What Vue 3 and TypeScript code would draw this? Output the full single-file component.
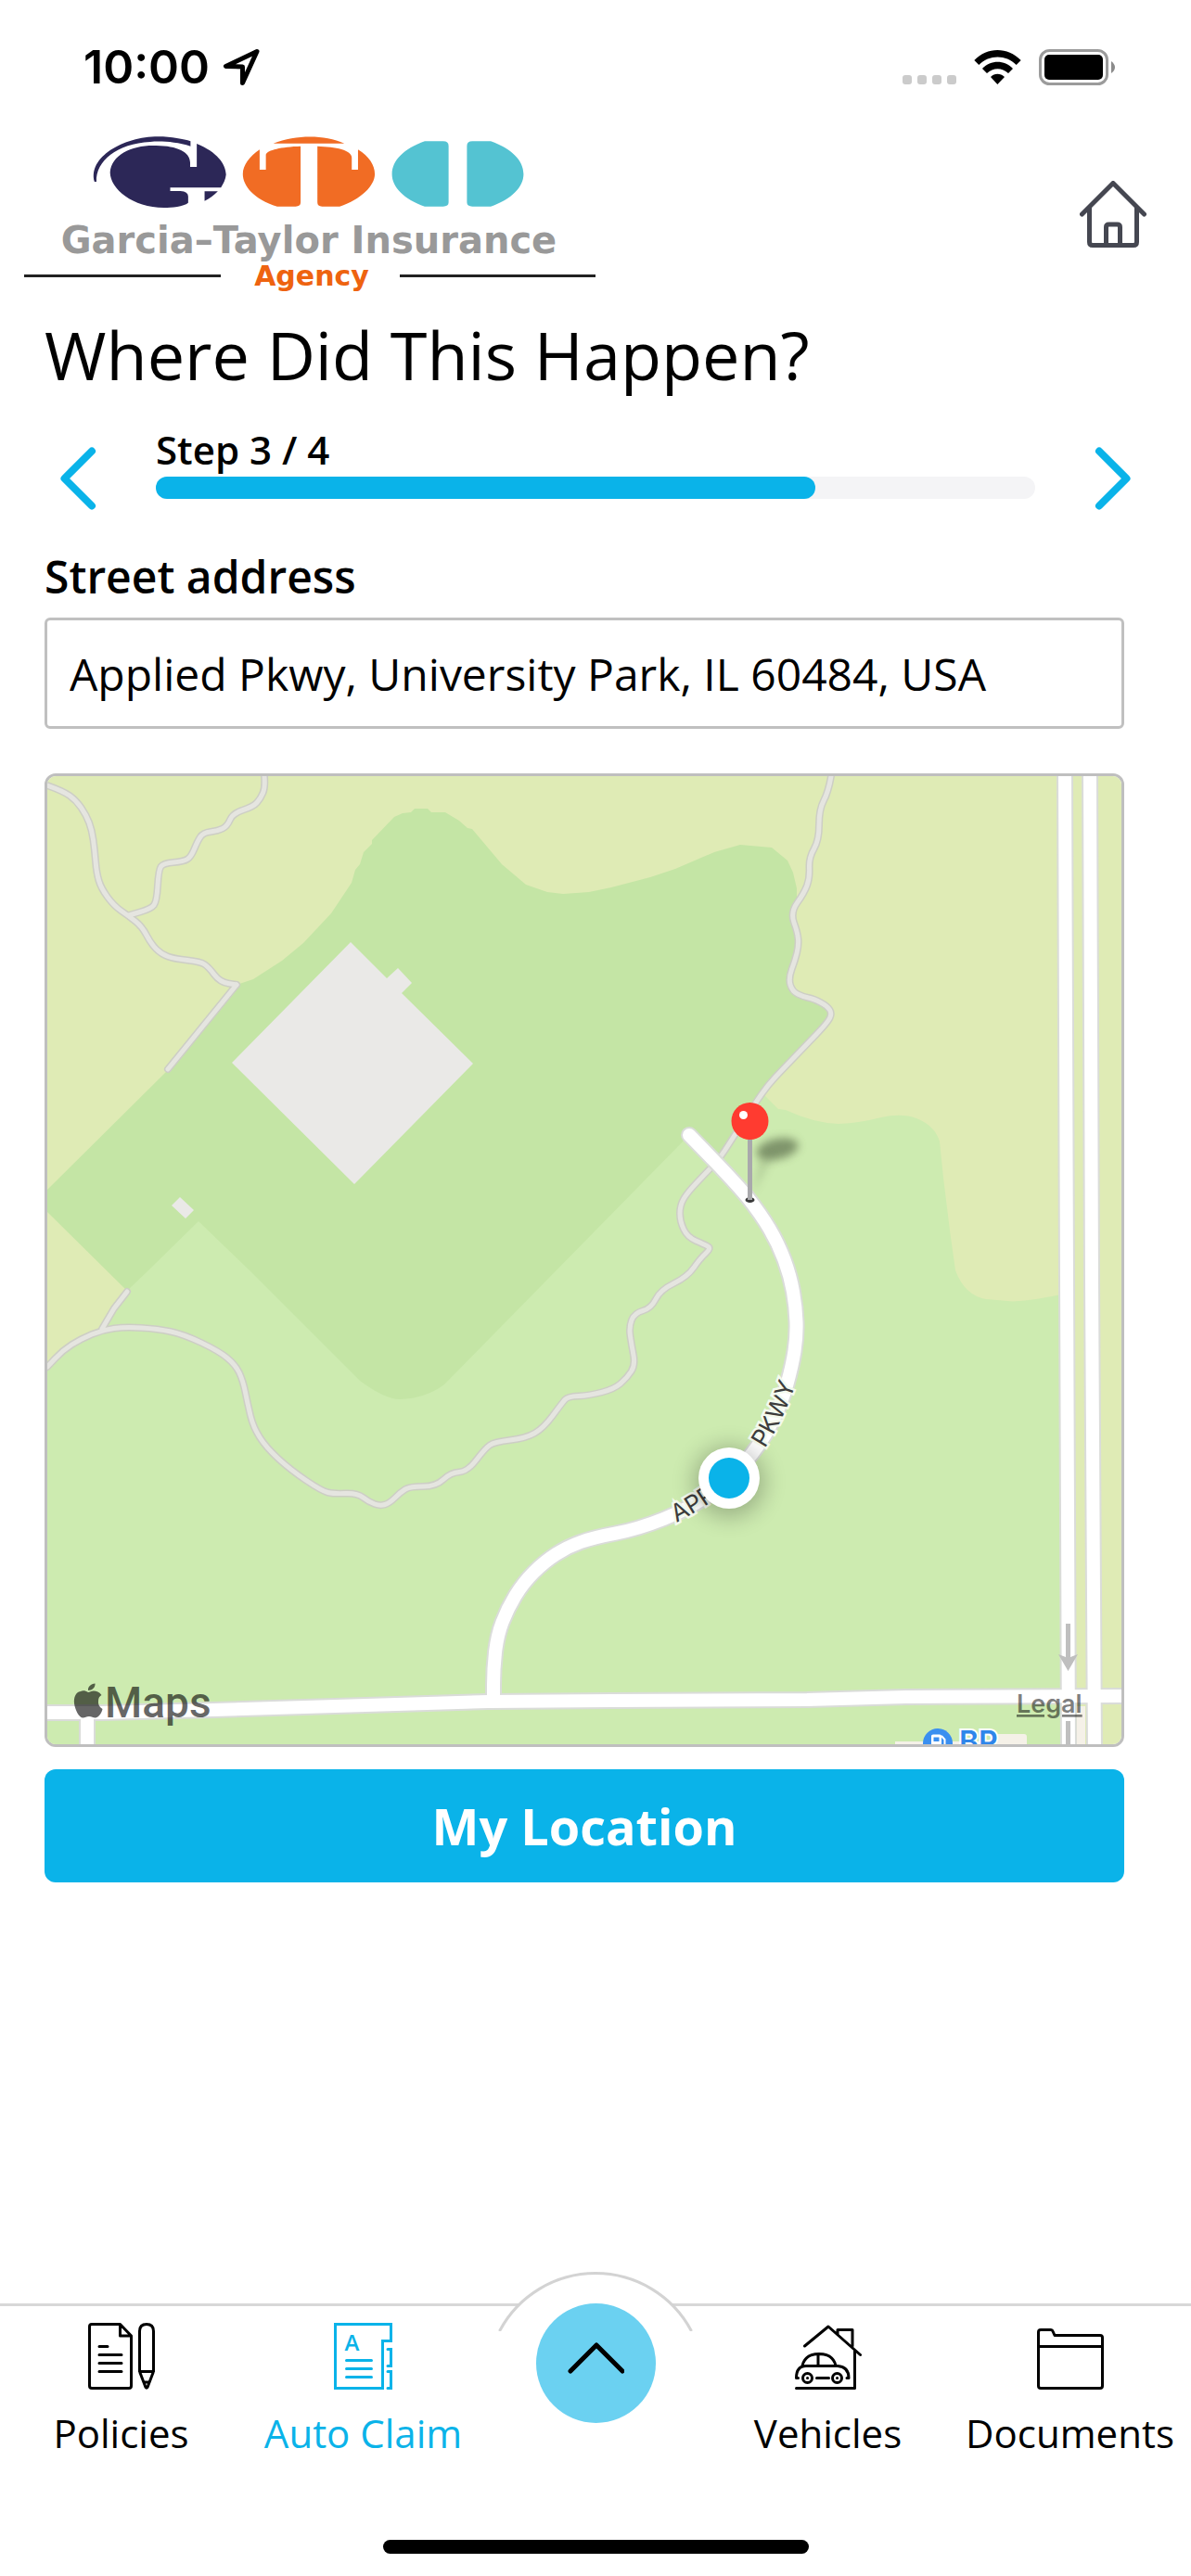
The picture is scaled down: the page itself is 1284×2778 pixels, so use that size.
<script setup lang="ts">
import { ref } from 'vue'

type Point = [number, number]

const address = ref('Applied Pkwy, University Park, IL 60484, USA')
const step = 3
const stepCount = 4

/** Rounds the corners of a polyline by curving through the segment midpoints. */
function smooth(points: Point[]): string {
  let d = `M${points[0][0]} ${points[0][1]}`
  for (let i = 1; i < points.length - 1; i++) {
    const [x, y] = points[i]
    const [nx, ny] = points[i + 1]
    d += ` Q${x} ${y} ${(x + nx) / 2} ${(y + ny) / 2}`
  }
  const last = points[points.length - 1]
  return `${d} L${last[0]} ${last[1]}`
}

const trails: string[] = [
  smooth([[51, 847], [68, 853], [82, 863], [93, 879], [99, 895], [102, 916], [104, 941], [109, 958], [123, 977], [139, 988], [153, 999], [163, 1018], [174, 1029], [188, 1034], [216, 1037], [225, 1043], [237, 1059], [255, 1062]]),
  'M255 1062 L181 1153',
  smooth([[285, 837], [286, 849], [281, 861], [273, 870], [251, 877], [245, 891], [235, 896], [219, 898], [213, 907], [206, 924], [198, 929], [176, 931], [171, 938], [169, 972], [163, 980], [139, 987]]),
  smooth([[896, 837], [893, 854], [883, 873], [883, 906], [872, 925], [873, 947], [867, 963], [852, 984], [860, 1006], [861, 1020], [857, 1036], [850, 1055], [854, 1069], [866, 1075], [877, 1077], [892, 1085], [897, 1093], [892, 1103], [869, 1127], [843, 1154], [828, 1170], [814, 1190], [787, 1232], [776, 1249], [764, 1262], [741, 1286], [733, 1300], [733, 1317], [741, 1334], [759, 1342], [767, 1346], [755, 1357], [741, 1377], [712, 1391], [702, 1411], [684, 1416], [678, 1431], [681, 1451], [685, 1472], [676, 1486], [662, 1498], [635, 1505], [612, 1506], [606, 1513], [586, 1540], [567, 1551], [533, 1555], [523, 1562], [504, 1587], [486, 1588], [470, 1603], [442, 1603], [432, 1609], [420, 1621], [410, 1624], [398, 1620], [385, 1610], [360, 1611], [347, 1608], [313, 1585], [287, 1561], [273, 1539], [267, 1514], [262, 1489], [254, 1472], [236, 1457], [198, 1439], [170, 1433], [135, 1431], [111, 1434], [87, 1444], [68, 1456], [51, 1474]]),
  'M110 1433 L123 1411 L137 1393',
]

const roads: string[] = [
  smooth([[743, 1224], [793, 1275], [820, 1309], [839, 1341], [852, 1376], [858, 1410], [859, 1441], [854, 1473], [843, 1512], [820, 1558], [785, 1597], [743, 1627], [688, 1649], [640, 1658], [612, 1668], [587, 1684], [564, 1707], [547, 1735], [536, 1764], [532, 1800], [532, 1834]]),
  'M40 1847 H110 L230 1844 L526 1835 L660 1834 L870 1833 L977 1830 L1220 1829',
  'M1148 830 L1150 1380 L1152 1890',
  'M1175 830 L1177 1380 L1180 1890',
  'M94 1850 V1890',
]
</script>

<template>
  <div class="screen">
    <div class="status">
      <div class="clock">
        <span class="time">10:00</span>
        <svg width="40" height="40" viewBox="0 0 40 40" fill="none" stroke="#000" stroke-width="5" stroke-linecap="round" stroke-linejoin="round" aria-hidden="true">
          <path d="M37 3.500 3.500 19.500 21.500 20 21.500 37.500Z" />
        </svg>
      </div>
      <div class="signals" aria-hidden="true">
        <div class="dots"><i v-for="n in 4" :key="n"></i></div>
        <svg width="51" height="37" viewBox="451 162 151 111">
          <path d="M451 195C493 151 559 151 602 195L587 210C553 176 500 176 466 210ZM477 222C505 193 548 193 576 222L561 237C541 218 512 218 492 237ZM504 249C517 236 535 236 549 249L526 273Z" />
        </svg>
        <svg width="82" height="39" viewBox="0 0 82 39">
          <rect x="1.500" y="1.500" width="72" height="36" rx="10" fill="none" stroke="#9b9b9b" stroke-width="3" />
          <rect x="6" y="6" width="63" height="27" rx="5" />
          <path d="M78 13Q82 16 82 19.500Q82 23 78 26Z" fill="#8b8b8b" />
        </svg>
      </div>
    </div>

    <header class="header">
      <svg class="logo" width="620" height="174" viewBox="0 0 620 174" role="img" aria-label="Garcia–Taylor Insurance Agency">
        <g transform="translate(-24 -144) scale(0.4209 0.3333)">
          <path fill="#2c2757" d="M282 558C285 500 340 468 400 471C455 472 486 492 487 525V540H504V465C556 492 578 530 579 565C578 580 572 595 566 607H436V618H462Q482 620 482 635V656C470 668 440 672 420 672C340 672 282 610 282 558ZM242 588C225 510 315 442 405 442C440 442 470 450 488 457V473C450 458 410 456 385 459C300 465 245 520 247 588ZM524 619H558C548 632 538 642 524 650Z" />
          <path fill="#f16c24" d="M700 464C760 435 830 435 882 464ZM622 563C622 535 640 505 665 484V549H681V500C685 485 720 475 770 473V655Q770 668 757 668H710C650 645 622 600 622 563ZM813 473C860 475 901 485 901 510V549H917V484C945 505 960 535 960 563C960 600 925 645 870 668H825Q813 668 813 655Z" />
          <path fill="#54c3d2" d="M1088 457H1135Q1149 457 1149 472V655Q1149 668 1135 668H1088C1035 645 1004 605 1004 563C1004 520 1035 480 1088 457ZM1257 457H1210Q1196 457 1196 472V655Q1196 668 1210 668H1257C1310 645 1341 605 1341 563C1341 520 1310 480 1257 457Z" />
        </g>
        <text class="brand" x="309" y="129" text-anchor="middle" fill="#999">Garcia–Taylor Insurance</text>
        <text class="brand-sub" x="312" y="164" text-anchor="middle" fill="#ee6310">Agency</text>
        <path d="M2 153.500H214M407 153.500H618" stroke="#222" stroke-width="3" />
      </svg>
      <button class="icon-button" type="button" aria-label="Home">
        <svg width="72" height="72" viewBox="0 0 72 72" fill="none" stroke="#454751" stroke-width="5" stroke-linecap="round" stroke-linejoin="round">
          <path d="M2.500 36 36 2.500 69.500 36M10.500 29V66Q10.500 69.500 14 69.500H58Q61.500 69.500 61.500 66V29M28.500 69V50Q28.500 47 31.500 47H40.500Q43.500 47 43.500 50V69" />
        </svg>
      </button>
    </header>

    <main>
      <h1>Where Did This Happen?</h1>

      <div class="stepper">
        <button class="icon-button" type="button" aria-label="Previous step">
          <svg width="40" height="68" viewBox="0 0 40 68"><path d="M35 4.500 5.500 34 35 63.500" /></svg>
        </button>
        <div class="progress">
          <span id="step-label">Step {{ step }} / {{ stepCount }}</span>
          <div class="track" role="progressbar" aria-labelledby="step-label" :aria-valuenow="step" :aria-valuemax="stepCount">
            <div class="fill" :style="{ width: (step / stepCount) * 100 + '%' }"></div>
          </div>
        </div>
        <button class="icon-button" type="button" aria-label="Next step">
          <svg width="40" height="68" viewBox="0 0 40 68"><path d="M5 4.500 34.500 34 5 63.500" /></svg>
        </button>
      </div>

      <form class="form" @submit.prevent>
        <label for="street">Street address</label>
        <input id="street" v-model="address" type="text" />

        <div class="map">
          <svg viewBox="51 837 1158 1044" role="group" aria-label="Map">
            <defs>
              <filter id="soft" x="-50%" y="-100%" width="200%" height="300%"><feGaussianBlur stdDeviation="5" /></filter>
              <filter id="halo" x="-50%" y="-50%" width="200%" height="200%"><feGaussianBlur stdDeviation="12" /></filter>
              <path id="road-label" d="M729 1642Q800 1605 824 1563Q848 1526 862 1480" />
            </defs>
            <rect x="51" y="837" width="1158" height="1044" fill="#dfebb5" />
            <path fill="#cdebb0" d="M823 1180 839 1196 847 1197Q877 1211 904 1212Q927 1211 950 1205Q972 1200 988 1206Q1008 1214 1013 1231L1017 1270 1024 1327 1030 1370Q1040 1397 1063 1401L1092 1403.500Q1118 1402 1148 1395L1150 1881H51V1473L68 1456 111 1433 137 1392 214 1300 700 1180Z" />
            <path fill="#c4e5a5" d="M51 1283 180 1155 255 1062 273 1056 304 1036 327 1017 357 985 379 952 383 938 388 932 392 919 401 910V906L425 881 434 877 443 876 447 872H461L465 876H480L495 885 504 893 509 894 541 932 567 954 590 962 607 964 635 962 659 957 701 946 728 937 770 919 798 911 832 914 849 928 855 941 859 958V974L853 984 860 1006 861 1020 852 1055 856 1068 876 1076 892 1085 896 1093 892 1103 843 1154 823 1181 777 1248 743 1224 640 1329 479 1493Q459 1508 431 1509Q415 1509 388 1489L269 1370 214 1317 160 1370 137 1392 51 1307Z" />
            <path fill="#eae9e7" d="M378 1016 417 1055 429 1044 444 1060 433 1071 510 1147 382 1277 250 1146ZM194 1291 209 1305 200 1314 185 1300Z" />
            <g fill="none" stroke-linecap="round" stroke-linejoin="round">
              <path v-for="(d, i) in trails" :key="'te' + i" :d="d" stroke="#cdcec5" stroke-width="8" />
              <path v-for="(d, i) in trails" :key="'tf' + i" :d="d" stroke="#e5e5e0" stroke-width="5" />
              <path v-for="(d, i) in roads" :key="'re' + i" :d="d" stroke="#dadcd9" stroke-width="18" />
              <path v-for="(d, i) in roads" :key="'rf' + i" :d="d" stroke="#fff" stroke-width="14" />
            </g>
            <path fill="#f5f1e8" d="M1161 1840H1170V1881H1161ZM965 1878H1072V1870H1104Q1107 1870 1107 1873V1881H965Z" />
            <g fill="#bfbfbf">
              <path d="M1149 1751H1154V1787L1162 1784 1151.500 1802 1141 1784 1149 1787Z" />
              <rect x="1149" y="1856" width="5" height="25" />
            </g>

            <circle cx="1011" cy="1880" r="16" fill="#3a8ff0" />
            <path fill="#fff" d="M1004 1872Q1004 1870.500 1006 1870.500H1013Q1015 1870.500 1015 1872V1890H1004ZM1006.500 1873.500V1878H1012.500V1873.500Z" fill-rule="evenodd" />
            <path d="M1015 1872 1018.500 1876V1888" fill="none" stroke="#fff" stroke-width="2" />
            <text class="poi" x="1034" y="1890">BP</text>

            <text class="street-name"><textPath href="#road-label">APPLIED</textPath></text>
            <text class="street-name"><textPath href="#road-label" startOffset="126">PKWY</textPath></text>

            <circle cx="786" cy="1598" r="38" fill="#000" opacity="0.25" filter="url(#halo)" />
            <circle cx="786" cy="1594" r="33" fill="#fff" />
            <circle cx="786" cy="1594" r="22" fill="#0ab3e9" />

            <ellipse cx="838" cy="1239" rx="23" ry="11" transform="rotate(-12 838 1239)" fill="#4c5c3c" opacity="0.6" filter="url(#soft)" />
            <path d="M811 1288 820 1248 834 1246Z" fill="#4c5c3c" opacity="0.2" filter="url(#soft)" />
            <ellipse cx="808.500" cy="1294" rx="5" ry="3" fill="#3a3a3a" />
            <path d="M808.500 1226V1294" stroke="#a9a9ac" stroke-width="5" />
            <circle cx="808.500" cy="1209" r="20" fill="#ff3b30" />
            <circle cx="801.500" cy="1202.500" r="4.500" fill="#fff" />

            <path fill="#000" opacity="0.6" d="M95 1825C92 1823 89 1823 87 1824C81 1825 79.500 1831 80 1837C81 1844 85 1852 89 1852.500C92 1852.500 93 1851 96 1851C99 1851 100 1852.500 103 1852.500C107 1852 110 1846 110.500 1843C107 1841 105.500 1838 106 1834C106 1831 107.500 1829 109.500 1828C107 1824.500 104 1823.500 101 1823.500C98.500 1823.500 96.500 1825 95 1825ZM95 1823C94.500 1819 98 1816 102.500 1815.500C103 1819.500 99.500 1823 95 1823Z" />
            <text class="map-brand" x="113" y="1852">Maps</text>
            <a href="#legal"><text class="legal" x="1096" y="1847">Legal</text></a>
          </svg>
        </div>

        <button class="primary" type="button">My Location</button>
      </form>
    </main>

    <nav class="tabs">
      <a class="tab" href="#policies">
        <svg viewBox="0 0 72 72"><path d="M34.500 1.500H4Q1.500 1.500 1.500 4V68Q1.500 70.500 4 70.500H44Q46.500 70.500 46.500 68V14ZM34.500 1.500V14H46.500M12 25.500H21M12 34.500H36M12 43.500H36M12 52.500H36M55.500 52.500V9Q55.500 1.500 63 1.500Q70.500 1.500 70.500 9V52.500ZM55.500 52.500 62 69.500Q63 71 64 69.500L70.500 52.500M60 64H66" /></svg>
        <span>Policies</span>
      </a>
      <a class="tab active" href="#auto-claim" aria-current="page">
        <svg viewBox="0 0 72 72"><path stroke-linejoin="miter" d="M5.500 1.500H65.500V19.500H56.500V70.500H5.500ZM17.500 40.500H44.500M17.500 49.500H44.500M17.500 58.500H44.500M62 28.500H65.500V46.500H62M62 52.500H65.500V70.500H62" /><text x="23.500" y="29.500" text-anchor="middle">A</text></svg>
        <span>Auto Claim</span>
      </a>
      <div class="center">
        <svg class="arch" width="216" height="64" viewBox="0 0 216 64" aria-hidden="true"><path d="M4.500 64A117 117 0 0 1 211.500 64" fill="#fff" stroke="#d3d3d3" stroke-width="3" /></svg>
        <button class="menu" type="button" aria-label="More">
          <svg width="62" height="36" viewBox="0 0 62 36"><path d="M4 32 32 4 60 32" /></svg>
        </button>
      </div>
      <a class="tab" href="#vehicles">
        <svg viewBox="0 0 72 72"><path d="M10.500 25 36 4 70.500 34.500M46 12V7.500H62V25M64.500 30V70.500H1.500M8 46C10 38 16 33.500 26 33.500S42 38 44 46M25 34V46M3.500 59.500H1.500C1.500 51 5 46.500 12 46.500H46C53 47 58 51 58 59.500H56M23.500 59.500H36.500" /><circle cx="13.500" cy="59.500" r="5" /><circle cx="45.500" cy="59.500" r="5" /><path d="M13.500 59.500h.1M45.500 59.500h.1" /></svg>
        <span>Vehicles</span>
      </a>
      <a class="tab" href="#documents">
        <svg viewBox="0 0 72 72"><path d="M1.500 10Q1.500 7.500 4 7.500H15Q16.500 7.500 17 9L19 13.500H68Q70.500 13.500 70.500 16V68Q70.500 70.500 68 70.500H4Q1.500 70.500 1.500 68ZM1.500 25.500H70.500" /></svg>
        <span>Documents</span>
      </a>
    </nav>
    <div class="home-bar"></div>
  </div>
</template>

<style>
body {
  margin: 0;
  background: #fff;
}
</style>

<style scoped>
.screen {
  display: flex;
  flex-direction: column;
  min-height: 100vh;
  color: #000;
  font-family: "Open Sans", "Noto Sans", sans-serif;
}
svg {
  display: block;
}
button {
  border: 0;
  padding: 0;
  background: none;
  font: inherit;
}
.status {
  display: flex;
  align-items: center;
  justify-content: space-between;
  box-sizing: border-box;
  height: 144px;
  padding: 0 82px 0 90px;
}
.clock,
.signals {
  display: flex;
  align-items: center;
}
.clock {
  gap: 14px;
}
.signals {
  gap: 19px;
}
.time {
  font: 600 50px/60px Inter, sans-serif;
}
.dots {
  display: flex;
  gap: 6px;
  padding-top: 27px;
}
.dots i {
  width: 10px;
  height: 10px;
  border-radius: 3px;
  background: #cbcbcb;
}
.header {
  display: flex;
  align-items: center;
  justify-content: space-between;
  padding: 0 48px 0 24px;
}
.brand {
  font: 700 40px "DejaVu Sans", sans-serif;
}
.brand-sub {
  font: 700 30px "DejaVu Sans", sans-serif;
}
h1 {
  margin: 16px 48px 0;
  font-size: 72px;
  font-weight: 400;
  line-height: 96px;
}
.stepper {
  display: grid;
  grid-template-columns: 168px 1fr 168px;
  align-items: end;
  margin-top: 26px;
}
.stepper svg {
  margin: 0 auto;
  fill: none;
  stroke: #0ab3e9;
  stroke-width: 8;
  stroke-linecap: round;
  stroke-linejoin: round;
}
.progress {
  padding-bottom: 12px;
}
.progress span {
  display: block;
  font-size: 42px;
  font-weight: 600;
  line-height: 58px;
}
.track {
  height: 24px;
  border-radius: 12px;
  background: #f4f4f6;
}
.fill {
  height: 100%;
  border-radius: 12px;
  background: #0ab3e9;
}
.form {
  display: flex;
  flex-direction: column;
  margin: 40px 72px 0 48px;
}
label {
  font-size: 48px;
  font-weight: 600;
  line-height: 64px;
}
input {
  box-sizing: border-box;
  width: 100%;
  height: 120px;
  margin: 12px 0 0;
  padding: 0 24px;
  border: 3px solid #c0c0c0;
  border-radius: 6px;
  background: #fff;
  color: #000;
  font: 48px "Open Sans", "Noto Sans", sans-serif;
}
.map {
  margin-top: 48px;
  overflow: hidden;
  border: 3px solid #bfbfbf;
  border-radius: 12px;
}
.map svg {
  width: 100%;
}
.street-name {
  fill: #3c3c3c;
  stroke: #f4faee;
  stroke-width: 5px;
  paint-order: stroke;
  font: 26px Inter, sans-serif;
}
.poi {
  fill: #2f86ea;
  stroke: #fff;
  stroke-width: 4px;
  paint-order: stroke;
  font: 600 32px Inter, sans-serif;
}
.map-brand {
  fill: rgba(0, 0, 0, 0.6);
  font: 500 46px Roboto, sans-serif;
}
.legal {
  fill: rgba(0, 0, 0, 0.5);
  font: 600 27px Inter, sans-serif;
  text-decoration: underline;
  text-decoration-thickness: 3px;
}
.primary {
  height: 122px;
  margin-top: 24px;
  border-radius: 12px;
  background: #0ab3e9;
  color: #fff;
  font-size: 54px;
  font-weight: 700;
}
.tabs {
  display: grid;
  grid-template-columns: minmax(0, 1fr) minmax(0, 1fr) 240px minmax(0, 1fr) minmax(0, 1fr);
  margin-top: auto;
  border-top: 3px solid #d8d8d8;
}
.tab {
  display: flex;
  flex-direction: column;
  align-items: center;
  gap: 19px;
  padding-top: 18px;
  color: #000;
  font-size: 42px;
  line-height: 56px;
  text-decoration: none;
}
.tab svg {
  width: 72px;
  height: 72px;
  fill: none;
  stroke: currentColor;
  stroke-width: 3;
  stroke-linecap: round;
  stroke-linejoin: round;
}
.tab text {
  fill: currentColor;
  stroke: none;
  font: 600 24px "Open Sans", sans-serif;
}
.active {
  color: #0ab3e9;
}
.center {
  position: relative;
  display: flex;
  justify-content: center;
  align-items: flex-start;
}
.arch {
  position: absolute;
  left: 12px;
  top: -37px;
}
.menu {
  position: relative;
  display: grid;
  place-items: center;
  width: 129px;
  height: 129px;
  margin-top: -3px;
  border-radius: 50%;
  background: #6bd1f1;
}
.menu svg {
  margin-bottom: 12px;
  fill: none;
  stroke: #000;
  stroke-width: 5;
  stroke-linecap: round;
  stroke-linejoin: round;
}
.home-bar {
  width: 459px;
  height: 15px;
  margin: 87px auto 24px;
  border-radius: 8px;
  background: #000;
}
</style>
